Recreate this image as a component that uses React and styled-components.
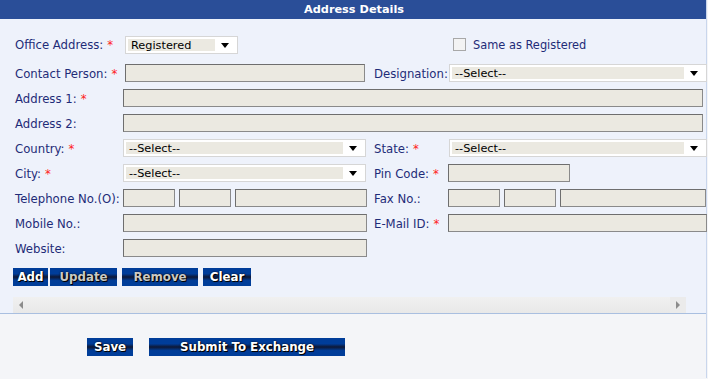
import React from "react";
import styled, { createGlobalStyle } from "styled-components";

const GlobalStyle = createGlobalStyle`
  body {
    margin: 0;
    background: #f4f5f8;
    font-family: "DejaVu Sans", Verdana, sans-serif;
  }
`;

const Page = styled.div`
  width: 706px;
  border-right: 1px solid #c9d6ec;
`;

const Header = styled.div`
  height: 19px;
  line-height: 19px;
  background-color: #2a4e98;
  color: white;
  font-size: 11.3px;
  font-weight: bold;
  text-align: center;
  padding-left: 2px;
`;

const Panel = styled.div`
  height: 277px;
  padding-top: 17px;
  background-color: #eef2fb;
  border-bottom: 1px solid #a9bfe0;
`;

const FormGrid = styled.div`
  display: grid;
  grid-template-columns: 108px 244px 81px 258px;
  grid-auto-rows: ${(p) => p.$row || 18}px;
  row-gap: 7px;
  padding-left: 15px;
  margin-bottom: ${(p) => p.$after || 0}px;
`;

const Label = styled.div`
  display: flex;
  align-items: center;
  padding-top: 1px;
  padding-left: ${(p) => (p.$right ? 7 : 0)}px;
  font-size: 11.7px;
  color: #1f2c78;
  white-space: nowrap;
`;

const Star = styled.span`
  color: #f22;
  margin-left: 4px;
`;

const Input = styled.div`
  box-sizing: border-box;
  width: ${(p) => p.$w}px;
  height: 18px;
  margin-left: ${(p) => p.$ml || 0}px;
  background-color: #ebe9e1;
  border: 1px solid #6e6e6e;
  border-right-color: #8a8a8a;
  border-bottom-color: #8a8a8a;
  grid-column: ${(p) => p.$span || "auto"};
`;

const Group = styled.div`
  display: flex;
  gap: 4px;
`;

const SelectBox = styled.div`
  box-sizing: border-box;
  width: ${(p) => p.$w}px;
  height: 18px;
  margin-left: ${(p) => p.$ml || 0}px;
  display: flex;
  align-items: stretch;
  padding: 2px;
  background: #fff;
  border: 1px solid #d6d6d6;
`;

const SelectText = styled.div`
  flex: 1;
  display: flex;
  align-items: center;
  padding-left: 3px;
  background: #ebe9e1;
  font-size: 11.3px;
  color: #000;
`;

const Arrow = styled.div`
  width: 20px;
  display: flex;
  align-items: center;
  justify-content: center;

  &::after {
    content: "";
    border-left: 4px solid transparent;
    border-right: 4px solid transparent;
    border-top: 5px solid #000;
  }
`;

const Check = styled.label`
  display: flex;
  align-items: center;
  gap: 7px;
  padding-left: 5px;
  font-size: 11.4px;
  color: #1f2c78;
`;

const Box = styled.span`
  box-sizing: border-box;
  width: 13px;
  height: 13px;
  background: #f3f3f3;
  border: 1px solid #a8a8a8;
`;

const ButtonBar = styled.div`
  display: flex;
  padding-left: ${(p) => p.$pl}px;
  margin-top: ${(p) => p.$mt || 0}px;
`;

const Button = styled.button`
  width: ${(p) => p.$w}px;
  height: 18px;
  margin: 0 0 0 ${(p) => p.$ml || 0}px;
  padding: 0;
  border: none;
  font-family: "DejaVu Sans", Verdana, sans-serif;
  font-size: 11.8px;
  font-weight: bold;
  color: ${(p) => (p.disabled ? "#c9c9c4" : "#ffffff")};
  text-shadow: 0 0 2px #000, 1px 1px 0 #000;
  background: linear-gradient(
    to bottom,
    #003d99 0%,
    #003d99 32%,
    #0e1835 50%,
    #003d99 70%,
    #003d99 100%
  );
`;

const ScrollBar = styled.div`
  width: 673px;
  height: 16px;
  margin: 11px 0 0 13px;
  display: flex;
  align-items: center;
  justify-content: space-between;
  background: linear-gradient(to bottom, #f0f0f0, #e8e8e8);
`;

const ScrollArrow = styled.span`
  display: flex;
  align-items: center;
  justify-content: center;
  width: 16px;
  height: 16px;
  background: ${(p) => (p.$end ? "#ebebeb" : "transparent")};

  &::after {
    content: "";
    border-top: 4px solid transparent;
    border-bottom: 4px solid transparent;
    ${(p) =>
      p.$end
        ? "border-left: 4px solid #8c8c8c;"
        : "border-right: 4px solid #8c8c8c;"}
  }
`;

const Footer = styled.div`
  height: 40px;
  padding-top: 24px;
  background: #f4f5f8;
`;

const Select = ({ w, ml, children }) => (
  <SelectBox $w={w} $ml={ml}>
    <SelectText>{children}</SelectText>
    <Arrow />
  </SelectBox>
);

const Req = ({ children, right }) => (
  <Label $right={right}>
    {children}
    <Star>*</Star>
  </Label>
);

export default function App() {
  return (
    <Page>
      <GlobalStyle />
      <Header>Address Details</Header>
      <Panel>
        <FormGrid $row={17} $after={11}>
          <Req>Office Address:</Req>
          <Select w={113} ml={2}>
            Registered
          </Select>
          <div />
          <Check>
            <Box />
            Same as Registered
          </Check>
        </FormGrid>

        <FormGrid>
          <Req>Contact Person:</Req>
          <Input $w={240} $ml={2} />
          <Label $right>Designation:</Label>
          <Select w={258} ml={1}>
            --Select--
          </Select>

          <Req>Address 1:</Req>
          <Input $w={580} $span="2 / 5" />

          <Label>Address 2:</Label>
          <Input $w={580} $span="2 / 5" />

          <Req>Country:</Req>
          <Select w={243}>--Select--</Select>
          <Req right>State:</Req>
          <Select w={258} ml={1}>
            --Select--
          </Select>

          <Req>City:</Req>
          <Select w={243}>--Select--</Select>
          <Req right>Pin Code:</Req>
          <Input $w={122} />

          <Label>Telephone No.(O):</Label>
          <Group>
            <Input $w={52} />
            <Input $w={52} />
            <Input $w={132} />
          </Group>
          <Label $right>Fax No.:</Label>
          <Group>
            <Input $w={52} />
            <Input $w={52} />
            <Input $w={146} />
          </Group>

          <Label>Mobile No.:</Label>
          <Input $w={244} />
          <Req right>E-Mail ID:</Req>
          <Input $w={259} />

          <Label>Website:</Label>
          <Input $w={244} />
        </FormGrid>

        <ButtonBar $pl={13} $mt={11}>
          <Button $w={35}>Add</Button>
          <Button $w={67} $ml={2} disabled>
            Update
          </Button>
          <Button $w={76} $ml={5} disabled>
            Remove
          </Button>
          <Button $w={48} $ml={5}>
            Clear
          </Button>
        </ButtonBar>

        <ScrollBar>
          <ScrollArrow />
          <ScrollArrow $end />
        </ScrollBar>
      </Panel>
      <Footer>
        <ButtonBar $pl={87}>
          <Button $w={46}>Save</Button>
          <Button $w={196} $ml={16}>
            Submit To Exchange
          </Button>
        </ButtonBar>
      </Footer>
    </Page>
  );
}
